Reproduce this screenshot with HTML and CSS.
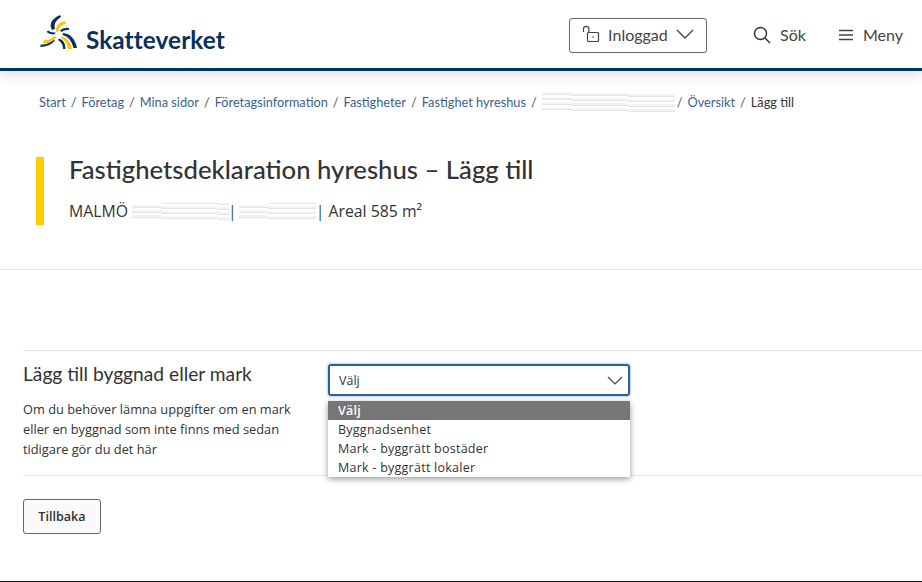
FILE: index.html
```html
<!DOCTYPE html>
<html lang="sv">
<head>
<meta charset="utf-8">
<title>Fastighetsdeklaration hyreshus – Lägg till</title>
<link rel="stylesheet" href="styles.css">
</head>
<body>
<header class="site-header">
  <a class="logo">
    <svg class="logo-mark" width="38" height="36" viewBox="0 0 38 36">
      <g fill="#0b2f5e">
        <path d="M12 16Q7 7 20 1L21 3Q13 8 15 15Z"/>
        <path d="M20 16.500Q23 13 29 14L29 16Q24 15.500 21.500 18Z"/>
        <path d="M23 19Q34 20 37 34H33.500Q31 23 22.500 21Z"/>
        <path d="M19 24.500Q26 27 25.500 35H23Q23 29 18 26Z"/>
        <path d="M15 26.500Q10 33 0 33L1 30.500Q8 31 13 25.500Z"/>
        <path d="M15 20Q11 21.500 6.500 18L8 16.500Q11 19 15.500 18.500Z"/>
      </g>
      <g fill="#f7c600">
        <path d="M16 18Q15 9 25 7L26 10Q19 11 18.500 17Z"/>
        <path d="M21.500 22.500Q30 24 32 35H28Q27 27 21 24Z"/>
        <path d="M16.500 23Q12 30 3 29L4 26Q10 27 14.500 22Z"/>
      </g>
    </svg>
    <span class="logo-text">Skatteverket</span>
  </a>
  <nav class="header-nav">
    <button class="login-btn">
      <svg width="18" height="18" viewBox="0 0 18 18" fill="none" stroke="#444" stroke-width="1.200">
        <rect x="5.500" y="7.500" width="11" height="9" rx="1"/>
        <path d="M1.500 7V4a2.700 2.700 0 0 1 5.400 0v3.500"/>
        <circle cx="11" cy="12" r=".8" fill="#444" stroke="none"/>
      </svg>
      <span>Inloggad</span>
      <svg width="18" height="10" viewBox="0 0 18 10" fill="none" stroke="#444" stroke-width="1.300"><path d="M1 1l8 8 8-8"/></svg>
    </button>
    <a class="nav-link search-link">
      <svg width="18" height="18" viewBox="0 0 18 18" fill="none" stroke="#333" stroke-width="1.500"><circle cx="7.500" cy="7.500" r="6"/><path d="M12 12l5 5"/></svg>
      <span>Sök</span>
    </a>
    <a class="nav-link menu-link">
      <svg width="14" height="12" viewBox="0 0 14 12" fill="none" stroke="#444" stroke-width="1.500"><path d="M0 1.500h14M0 6h14M0 10.500h14"/></svg>
      <span>Meny</span>
    </a>
  </nav>
</header>

<nav class="breadcrumb">
  <a>Start</a><i>/</i><a>Företag</a><i>/</i><a>Mina sidor</a><i>/</i><a>Företagsinformation</a><i>/</i><a>Fastigheter</a><i>/</i><a>Fastighet hyreshus</a><i>/</i><span class="redact redact-crumb"></span><i class="tight">/</i><a>Översikt</a><i>/</i><span class="current">Lägg till</span>
</nav>

<section class="hero">
  <h1>Fastighetsdeklaration hyreshus – Lägg till</h1>
  <p class="hero-meta">MALMÖ <span class="redact redact-a"></span><span class="pipe">|</span><span class="redact redact-b"></span><span class="pipe">|</span> Areal 585 m²</p>
</section>

<main class="content">
  <div class="form-row">
    <div class="form-info">
      <h2>Lägg till byggnad eller mark</h2>
      <p>Om du behöver lämna uppgifter om en mark eller en byggnad som inte finns med sedan tidigare gör du det här</p>
    </div>
    <div class="select-wrap">
      <div class="select-box">
        <span>Välj</span>
        <svg width="16" height="9" viewBox="0 0 16 9" fill="none" stroke="#444" stroke-width="1.200"><path d="M1 1l7 7 7-7"/></svg>
      </div>
      <ul class="select-menu">
        <li class="selected">Välj</li>
        <li>Byggnadsenhet</li>
        <li>Mark - byggrätt bostäder</li>
        <li>Mark - byggrätt lokaler</li>
      </ul>
    </div>
  </div>
  <button class="back-btn">Tillbaka</button>
</main>
<div class="page-end"></div>
</body>
</html>
```
FILE: styles.css
```css
* { box-sizing: border-box; }
html, body { margin: 0; padding: 0; }
body {
  height: 582px;
  overflow: hidden;
  background: #fff;
  color: #333;
  font-family: Lato, "Open Sans", sans-serif;
  position: relative;
}
.site-header {
  height: 71px;
  border-bottom: 3px solid #003366;
  display: flex;
  align-items: flex-start;
  justify-content: space-between;
  padding: 14px 19px 0 40px;
  box-shadow: 0 4px 12px rgba(0,0,0,.13);
  position: relative;
}
.logo { display: flex; align-items: flex-start; }
.logo-mark { display: block; }
.logo-text {
  font-weight: 700;
  font-size: 24.300px;
  line-height: 30px;
  color: #0b2f5e;
  margin: 11px 0 0 8px;
  letter-spacing: .1px;
}
.header-nav { display: flex; align-items: center; height: 43px; margin-top: 0; }
.login-btn {
  width: 138px;
  height: 35px;
  border: 1px solid #666;
  border-radius: 3px;
  background: #fff;
  display: flex;
  align-items: center;
  padding: 0 12px 3px 12px;
  font: 400 16px Lato, sans-serif;
  color: #444;
  margin-right: 46px;
}
.login-btn span { margin: 0 8px 0 8px; }
.nav-link { display: flex; align-items: center; font-size: 16px; color: #444; margin-top: -2px; }
.nav-link span { margin-left: 9px; }
.search-link { margin-right: 33px; }
.menu-link span { margin-left: 10px; }

.breadcrumb {
  margin: 22px 0 0 39px;
  font-size: 12.750px;
  line-height: 18px;
  height: 18px;
  display: flex;
  align-items: center;
  white-space: nowrap;
  color: #44546a;
}
.breadcrumb a { color: #3d5f8f; }
.breadcrumb i { font-style: normal; margin: 0 5px; color: #555; }
.breadcrumb i.tight { margin-left: 2px; }
.breadcrumb .current { color: #333; }

.redact {
  display: inline-block;
  background:
    repeating-linear-gradient(1deg, #fff 0 2px, #e4e4e4 2px 3px, #f4f4f4 3px 5px);
}
.redact-crumb { width: 133px; height: 20px; }
.redact-a { width: 97px; height: 17px; vertical-align: -3px; margin: 0 -1px 0 0; }
.redact-b { width: 77px; height: 17px; vertical-align: -3px; margin: 0 0 0 2px; }

.hero {
  margin: 46px 0 0 36px;
  height: 68px;
  border-left: 8px solid #ffcc00;
  padding-left: 25px;
}
.hero h1 {
  margin: 0;
  font-size: 25.700px;
  line-height: 24px;
  font-weight: 500;
  color: #333;
  font-variant-ligatures: common-ligatures;
  text-rendering: optimizeLegibility;
}
.hero-meta {
  margin: 19px 0 0;
  font-family: "Open Sans", sans-serif;
  font-size: 15.800px;
  line-height: 22px;
  color: #333;
  white-space: nowrap;
}
.pipe { color: #1a5a96; }

.content {
  margin-top: 44px;
  border-top: 1px solid #e3e3e3;
  padding: 80px 0 0 23px;
}
.form-row {
  border-top: 1px solid #e3e3e3;
  border-bottom: 1px solid #e3e3e3;
  height: 126px;
  display: flex;
}
.form-info { width: 305px; }
.form-info h2 {
  margin: 10px 0 0;
  font-size: 19.200px;
  line-height: 26px;
  font-weight: 400;
  color: #333;
  text-rendering: optimizeLegibility;
}
.form-info p {
  margin: 12px 0 0;
  font-family: "Open Sans", sans-serif;
  font-size: 12.800px;
  line-height: 20px;
  color: #333;
  width: 275px;
}
.select-wrap { position: relative; width: 302px; margin-top: 13px; }
.select-box {
  height: 32px;
  border: 2px solid #2a6199;
  border-radius: 3px;
  box-shadow: 0 0 3px rgba(42,97,153,.6);
  display: flex;
  align-items: center;
  justify-content: space-between;
  padding: 0 5px 0 9px;
  font-family: "Open Sans", sans-serif;
  font-size: 12.500px;
  color: #333;
}
.select-menu {
  position: absolute;
  top: 37px;
  left: 0;
  width: 302px;
  margin: 0;
  padding: 0;
  list-style: none;
  background: #fff;
  box-shadow: 0 2px 6px rgba(0,0,0,.4);
  font-family: "Open Sans", sans-serif;
  font-size: 12.500px;
  letter-spacing: .25px;
  line-height: 19px;
  color: #333;
}
.select-menu li { padding: 0 10px; height: 19px; }
.select-menu .selected { background: #767676; color: #fff; font-weight: 600; }
.back-btn {
  display: block;
  margin-top: 23px;
  width: 78px;
  height: 35px;
  border: 1px solid #666;
  border-radius: 3px;
  background: #fafafa;
  font: 600 12.600px "Open Sans", sans-serif;
  color: #333;
  padding: 0;
}
.page-end {
  position: absolute;
  left: 0;
  right: 0;
  bottom: 0;
  height: 1px;
  background: #111;
}
```
